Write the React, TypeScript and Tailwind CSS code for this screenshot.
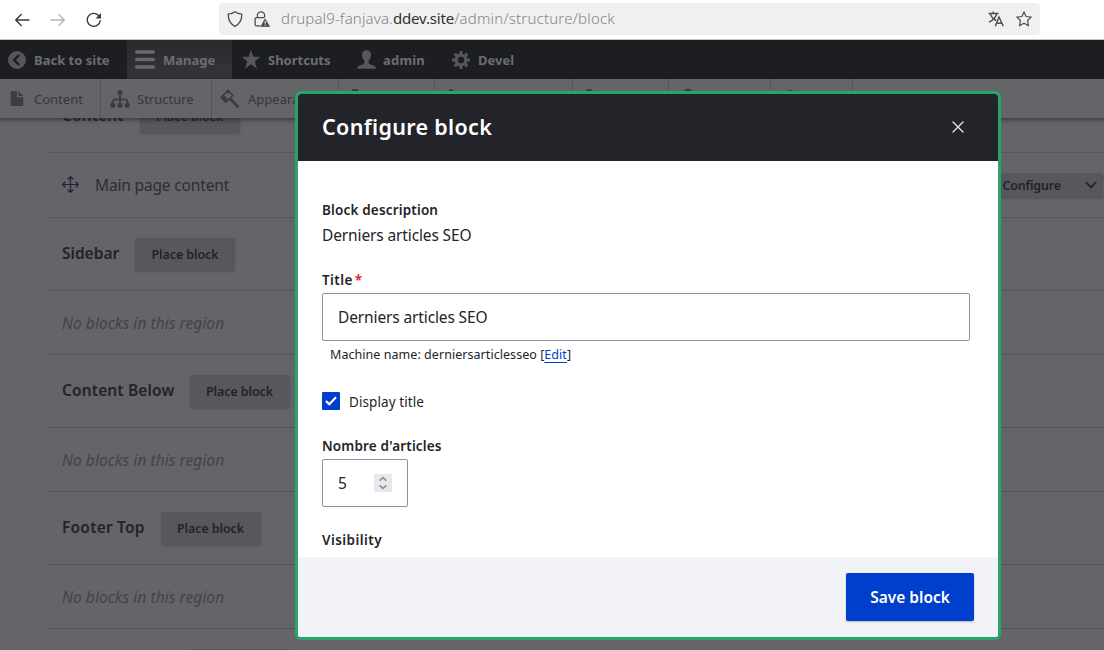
import type { ReactNode } from "react";

function BrowserBar() {
  return (
    <header className="flex h-10 shrink-0 items-center border-b border-[#c6c6c6] bg-white text-[#3b3b3f]">
      <div className="flex w-[219px] items-center gap-5 pl-[14px]">
        <svg className="size-4" viewBox="0 0 16 16" fill="none" stroke="currentColor" strokeWidth="1.4" strokeLinecap="round" strokeLinejoin="round">
          <path d="M15 8H1.7M7.2 2.6 1.7 8l5.5 5.4" />
        </svg>
        <svg className="size-4 text-[#b5b5b7]" viewBox="0 0 16 16" fill="none" stroke="currentColor" strokeWidth="1.4" strokeLinecap="round" strokeLinejoin="round">
          <path d="M1 8h13.3M8.8 2.6 14.3 8l-5.5 5.4" />
        </svg>
        <svg className="size-4" viewBox="0 0 16 16" fill="none">
          <path d="M14.2 8.8A6.5 6.5 0 1 1 12.3 3.2" stroke="currentColor" strokeWidth="1.4" strokeLinecap="round" />
          <path d="M15 1v5.5H9.5z" fill="currentColor" />
        </svg>
      </div>
      <div className="mb-px flex h-8 w-[821px] items-center rounded bg-[#f0f0f0] pl-2 pr-2 text-[#4c4c50]">
        <svg className="size-4" viewBox="0 0 16 16" fill="none" stroke="currentColor" strokeWidth="1.3" strokeLinejoin="round">
          <path d="M8 .8C6.400 2 4 2.900 1.200 3.200 1.100 9 3.200 13 8 15.300 12.800 13 14.900 9 14.800 3.200 12 2.900 9.600 2 8 .8z" />
        </svg>
        <svg className="ml-[11px] size-4" viewBox="0 0 16 16" fill="none">
          <path d="M3.400 6.500V4.400a3.600 3.600 0 0 1 7.200 0v2.100M6.500 14.800H2.300A1.200 1.200 0 0 1 1.100 13.600V8A1.300 1.300 0 0 1 2.400 6.700h8" stroke="currentColor" strokeWidth="1.3" />
          <path d="M11 7.800 15.800 15.700H6.700z" fill="currentColor" stroke="currentColor" strokeWidth=".5" strokeLinejoin="round" />
          <path d="M11.200 10v2.700M11.200 13.600v1.100" stroke="#f0f0f0" strokeWidth="1.100" />
        </svg>
        <div className="ml-[11px] flex pb-0.5 text-[15px] font-light text-[#858587]">
          <span className="tracking-[0.14px]">drupal9-fanjava.</span>
          <span className="font-normal tracking-[-0.15px] text-[#303034]">ddev.site</span>
          <span className="tracking-[0.2px]">/admin/structure/block</span>
        </div>
        <svg className="ml-auto size-4" viewBox="0 0 16 16" fill="none" stroke="currentColor" strokeWidth="1.400">
          <path d="M.5 2.500h10M5.200.5v2M2.300 2.700C3.300 6 5.500 8.200 8.300 9.500M8.700 2.700C7.600 6.500 5 9.300 1 11.200M7.300 15.200l3.700-9.200 4.300 9.200M8.600 12.200h5.200" />
        </svg>
        <svg className="ml-3 size-4" viewBox="0 0 16 16" fill="none" stroke="currentColor" strokeWidth="1.200" strokeLinejoin="round">
          <path d="m8 .9 2.100 4.600 5.100.6-3.700 3.400 1 5.300L8 12.200l-4.500 2.600 1-5.300L.8 6.100l5.100-.6z" />
        </svg>
      </div>
    </header>
  );
}

function AdminBar() {
  const tab = "flex h-full items-center text-[13px] font-bold";
  return (
    <nav className="flex h-[39px] shrink-0 items-center bg-[#1d1e22] text-[#6c6d71]">
      <div className={`${tab} w-[127px] pl-2`}>
        <svg className="mr-2 size-[18px] text-[#56575b]" viewBox="0 0 18 18">
          <circle cx="9" cy="9" r="9" fill="currentColor" />
          <path d="M11 4 6.200 9l4.800 5" fill="none" stroke="#1d1e22" strokeWidth="2.500" />
        </svg>
        <span className="pt-0.5">Back to site</span>
      </div>
      <div className={`${tab} w-[105px] bg-linear-to-b from-[#292a2e] to-[#35363a] pl-2`}>
        <svg className="mr-2 h-[19px] w-5 text-[#68696e]" viewBox="0 0 20 19">
          <path d="M1.700 2h16.600M1.700 9.500h16.600M1.700 17h16.600" stroke="currentColor" strokeWidth="3.400" strokeLinecap="round" />
        </svg>
        <span className="pt-0.5">Manage</span>
      </div>
      <div className={`${tab} w-[118px] pl-[9px]`}>
        <svg className="mr-[7px] h-[19px] w-5 text-[#56575b]" viewBox="0 0 20 19">
          <path fill="currentColor" d="m10 0 2.400 6.800h6.900l-5.500 4.400 2.200 7.500L10 14.200l-6 4.500 2.200-7.500L.7 6.800h6.900z" />
        </svg>
        <span className="pt-0.5">Shortcuts</span>
      </div>
      <div className={`${tab} w-[93px] pl-[7px]`}>
        <svg className="mr-[7px] h-[19px] w-[19px] text-[#56575b]" viewBox="0 0 19 19">
          <path fill="currentColor" d="M9.500.3c3 0 4.700 2.100 4.500 5-.1 2.400-1.100 4.300-2.300 5.300v2.200c0 1 .8 1.400 2.500 1.900 2.600.7 4.600 1.600 4.800 4H0c.2-2.400 2.200-3.300 4.800-4 1.700-.5 2.500-.9 2.500-1.900v-2.200C6.100 9.600 5.100 7.700 5 5.300 4.800 2.400 6.500.3 9.500.3z" />
        </svg>
        <span className="pt-0.5 tracking-[0.2px]">admin</span>
      </div>
      <div className={`${tab} pl-[9px]`}>
        <svg className="mr-2 size-[18px] text-[#56575b]" viewBox="0 0 18 18">
          <path d="M9 0v18M0 9h18M2.600 2.600l12.800 12.800M15.400 2.600 2.600 15.400" stroke="currentColor" strokeWidth="3" />
          <circle cx="9" cy="9" r="6.500" fill="currentColor" />
          <circle cx="9" cy="9" r="3.200" fill="#1d1e22" />
        </svg>
        <span className="pt-0.5">Devel</span>
      </div>
    </nav>
  );
}

function TrayItem({ size, children }: { size: string; children?: ReactNode }) {
  return <div className={`flex h-full shrink-0 items-center border-r border-[#57565b] ${size}`}>{children}</div>;
}

function Tray() {
  return (
    <nav className="relative flex h-[39px] shrink-0 items-center bg-[#656469] text-[13px] text-[#36373b] shadow-[0_1px_4px_1px_rgba(30,30,36,0.55)]">
      <TrayItem size="w-[101px] pl-[10px]">
        <svg className="mr-[10px] h-[17px] w-[14px]" viewBox="0 0 14 17" fill="#3c3d41">
          <path d="M.7 1h6.200v6.200h6.400v8.800H.7zM8.200 1l5.100 4.900H8.200z" />
        </svg>
        <span className="pt-0.5">Content</span>
      </TrayItem>
      <TrayItem size="w-[111px] pl-[9px]">
        <svg className="mr-[7px] h-[18px] w-5" viewBox="0 0 20 18" fill="#3c3d41">
          <circle cx="10" cy="2.700" r="2.600" />
          <circle cx="2.700" cy="15.200" r="2.600" />
          <circle cx="10" cy="15.200" r="2.600" />
          <circle cx="17.300" cy="15.200" r="2.600" />
          <path d="M10 3v12M2.700 15v-3.500a2 2 0 0 1 2-2h10.600a2 2 0 0 1 2 2V15" fill="none" stroke="#3c3d41" strokeWidth="1.900" />
        </svg>
        <span className="pt-0.5">Structure</span>
      </TrayItem>
      <TrayItem size="w-[127px] pl-2">
        <svg className="mr-2 h-5 w-5" viewBox="0 0 20 20" fill="none">
          <path d="m1.100 8.500 6.800-7.100 5 5L6 13.300z" stroke="#3c3d41" strokeWidth="1.500" />
          <path d="m.2 8.500 3-3.200 5 5-2.800 3.600zM5.600 3 8 .5l2.100 2L7.600 5z" fill="#3c3d41" />
          <path d="m10.500 10 8 8.200" stroke="#3c3d41" strokeWidth="3" />
        </svg>
        <span className="pt-0.5">Appearance</span>
      </TrayItem>
      <TrayItem size="w-24 pl-2">
        <svg className="size-5" viewBox="0 0 20 20" fill="#3c3d41"><path d="M5 0h6v4h6v12H2V5h3z" /></svg>
      </TrayItem>
      <TrayItem size="w-[138px] pl-2">
        <svg className="size-5" viewBox="0 0 20 20" fill="none" stroke="#3c3d41" strokeWidth="3"><path d="M6 1.500c6 0 6 5 2 6l9 10" /></svg>
      </TrayItem>
      <TrayItem size="w-24 pl-[6px]">
        <svg className="size-5" viewBox="0 0 20 20" fill="#3c3d41"><circle cx="10" cy="4" r="4" /><path d="M3 18V9h14v9z" /></svg>
      </TrayItem>
      <TrayItem size="w-[102px] pl-[7px]">
        <svg className="size-5" viewBox="0 0 20 20" fill="#3c3d41"><path d="M9 0h6v18H9zM2 8h5v10H2z" /></svg>
      </TrayItem>
      <TrayItem size="w-[82px] pl-[9px]">
        <svg className="size-5" viewBox="0 0 20 20" fill="#3c3d41"><circle cx="10" cy="10" r="9" /></svg>
      </TrayItem>
    </nav>
  );
}

function Region({ title, spacing = "" }: { title: ReactNode; spacing?: string }) {
  return (
    <div className="flex h-[73px] shrink-0 items-center border-b border-[#57565b] pl-4">
      <h3 className={`pb-0.5 text-[15.5px] font-semibold leading-5 text-[#222328] ${spacing}`}>{title}</h3>
      <button className="flex h-[33px] w-[100px] items-center justify-center rounded-xs bg-[#58575d] pt-0.5 text-[12.5px] font-semibold tracking-[-0.1px] text-[#222328] shadow-[0_1px_2px_rgba(40,40,46,0.25)]">
        Place block
      </button>
    </div>
  );
}

function EmptyRow() {
  return (
    <div className="flex h-16 shrink-0 items-center border-b border-[#57565b] pl-4 pt-0.5 text-[15.5px] italic tracking-[0.05px] text-[#434348]">
      No blocks in this region
    </div>
  );
}

function BlockList() {
  return (
    <main className="min-h-0 flex-1 overflow-hidden pl-[46px]">
      <div className="-mt-[38px] flex flex-col">
        <Region title="Content" spacing="w-[77.5px] tracking-[0.1px]" />
        <div className="flex h-[65px] shrink-0 items-center border-b border-[#57565b] pl-4">
          <svg className="mb-px mr-4 size-[17px]" viewBox="0 0 17 17" fill="none" stroke="#20223a" strokeWidth="1.200" strokeLinecap="round" strokeLinejoin="round">
            <path d="M8.500.8v15.400M.8 8.500h15.400M6 3 8.500.7 11 3M6 14l2.500 2.300L11 14M3 6 .7 8.500 3 11M14 6l2.300 2.500L14 11" />
          </svg>
          <span className="pt-0.5 text-[15.5px] tracking-[-0.16px] text-[#2d2e33]">Main page content</span>
          <button className="ml-auto mr-px flex h-[25px] w-[110px] items-center rounded-xs bg-[#58575d] pl-[9.5px] text-[12.5px] font-semibold tracking-[-0.2px] text-[#222328] shadow-[0_1px_2px_rgba(40,40,46,0.25)]">
            <span className="pt-0.5">Configure</span>
            <svg className="ml-auto mr-[6px] h-2 w-3" viewBox="0 0 12 8" fill="none" stroke="#222330" strokeWidth="1.800">
              <path d="m.8 1 5.200 5.400L11.200 1" />
            </svg>
          </button>
        </div>
        <Region title="Sidebar" spacing="w-[73px]" />
        <EmptyRow />
        <Region title="Content Below" spacing="w-[127.5px] tracking-[0.13px]" />
        <EmptyRow />
        <Region title="Footer Top" spacing="w-[98.5px] tracking-[0.22px]" />
        <EmptyRow />
        <Region title="" spacing="w-32" />
      </div>
    </main>
  );
}

function Label({ children }: { children: ReactNode }) {
  return <div className="text-[13.5px] font-semibold leading-5 tracking-[0.16px]">{children}</div>;
}

function Dialog() {
  return (
    <section className="absolute left-[295px] top-[91px] flex h-[549px] w-[706px] flex-col overflow-hidden rounded-md border-3 border-[#26a769] bg-white text-[#232429]">
      <div className="flex h-[67px] shrink-0 items-center justify-between bg-[#232429] pl-6 pr-[34px] text-white">
        <h2 className="text-[21.5px] font-semibold tracking-[0.33px]">Configure block</h2>
        <svg className="mb-px size-3" viewBox="0 0 12 12" stroke="#e4e4e6" strokeWidth="1.400" strokeLinecap="round">
          <path d="m1 1 10 10M11 1 1 11" />
        </svg>
      </div>
      <div className="flex min-h-0 flex-1 flex-col overflow-hidden px-6 pt-[39px]">
        <Label>Block description</Label>
        <p className="mt-[3px] text-[15.5px] leading-6 tracking-[-0.13px]">Derniers articles SEO</p>
        <div className="mt-[23px]">
          <Label>
            <span className="tracking-[0.4px]">Title</span>
            <span className="ml-[2px] text-[#d72222]">*</span>
          </Label>
        </div>
        <div className="mt-[3px] flex h-12 w-[648px] items-center rounded-xs border border-[#8e929c] px-[15px] pt-0.5 text-[15.5px] tracking-[-0.13px]">
          Derniers articles SEO
        </div>
        <p className="mt-1 pl-2 text-[12.5px] leading-5 tracking-[0.05px]">
          Machine name: derniersarticlesseo [<a className="text-[#003ecc] underline underline-offset-[3px]">Edit</a>]
        </p>
        <label className="mt-[26px] flex h-5 items-center text-[13.5px] tracking-[0.08px]">
          <span className="mr-[9px] flex size-[18px] items-center justify-center rounded-[1px] bg-[#003ecc]">
            <svg className="h-[10px] w-3" viewBox="0 0 12 10" fill="none" stroke="white" strokeWidth="2.200">
              <path d="m1 5 3.300 3.300L11 1.300" />
            </svg>
          </span>
          <span className="pt-0.5">Display title</span>
        </label>
        <div className="mt-[25px]">
          <Label>Nombre d'articles</Label>
        </div>
        <div className="mt-[3px] flex h-12 w-[86px] shrink-0 items-center justify-between rounded-xs border border-[#8e929c] px-[15px] text-[15.5px]">
          <span className="pt-0.5">5</span>
          <span className="flex h-[18px] w-[18px] items-center justify-center bg-[#e8e7ed]">
            <svg className="h-[14px] w-2" viewBox="0 0 8 14" fill="none" stroke="#8e8d97" strokeWidth="1.500">
              <path d="m.7 4.600 3.300-3 3.300 3M.7 9.400l3.300 3 3.300-3" />
            </svg>
          </span>
        </div>
        <div className="mt-[23px] shrink-0">
          <Label>
            <span className="tracking-[0.45px]">Visibility</span>
          </Label>
        </div>
      </div>
      <div className="flex h-20 shrink-0 items-center justify-end bg-[#f2f3f9] pr-6">
        <button className="h-12 w-32 rounded-xs bg-[#003ecc] pt-0.5 text-[15.5px] font-semibold text-white shadow-[0_1px_2px_rgba(0,0,0,0.25)]">
          Save block
        </button>
      </div>
    </section>
  );
}

export default function App() {
  return (
    <div className="relative flex h-[650px] w-[1104px] flex-col overflow-hidden bg-[#656469] font-['Noto_Sans',sans-serif]">
      <BrowserBar />
      <AdminBar />
      <Tray />
      <BlockList />
      <Dialog />
    </div>
  );
}
